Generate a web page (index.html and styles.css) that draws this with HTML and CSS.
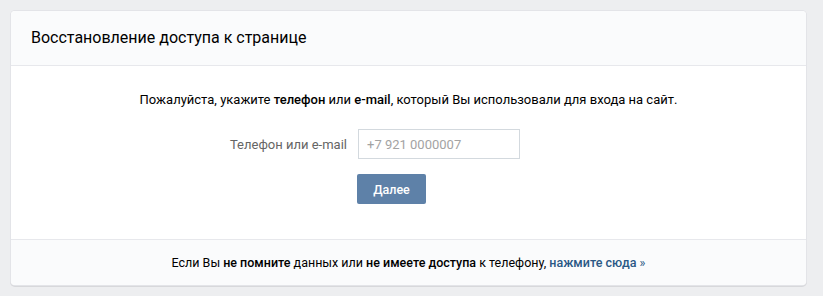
FILE: index.html
```html
<!DOCTYPE html>
<html lang="ru">

<head>
    <meta charset="utf-8">
    <title>Восстановление доступа к странице</title>
    <link rel="stylesheet" href="styles.css">
</head>

<body>
    <section class="card">
        <header class="card-head">Восстановление доступа к странице</header>

        <div class="card-body">
            <p class="intro">Пожалуйста, укажите <b>телефон</b> или <b>e-mail</b>, который Вы использовали для входа на сайт.</p>

            <form class="restore-form">
                <label class="restore-label" for="login">Телефон или e-mail</label>
                <input class="restore-input" id="login" type="text" placeholder="+7 921 0000007">
                <button class="restore-btn" type="button">Далее</button>
            </form>
        </div>

        <footer class="card-foot">
            Если Вы <b>не помните</b> данных или <b>не имеете доступа</b> к телефону, <a href="#"><b>нажмите сюда</b> »</a>
        </footer>
    </section>
</body>

</html>
```

FILE: styles.css
```css
body {
    margin: 0;
    padding: 11px 17px 11px 11px;
    background: #edeef0;
    font-family: Roboto, "Open Sans", sans-serif;
    font-size: 13px;
    color: #000;
}

.card {
    background: #fff;
    border-radius: 4px;
    box-shadow: 0 0 0 1px #e3e4e8, 0 1px 0 1px #d7d8db;
    overflow: hidden;
}

.card-head {
    height: 54px;
    line-height: 54px;
    padding: 0 20px;
    background: #fafbfc;
    border-bottom: 1px solid #e7e8ec;
    font-size: 16px;
}

.card-body {
    padding: 25px 0 35px;
}

.intro {
    margin: 0 0 21px;
    line-height: 17px;
    text-align: center;
}

.intro b,
.card-foot b {
    font-weight: 500;
}

.restore-form {
    display: grid;
    grid-template-columns: 336px 162px;
    column-gap: 11px;
    row-gap: 15px;
    align-items: center;
}

.restore-label {
    text-align: right;
    color: #656565;
}

.restore-input {
    box-sizing: border-box;
    width: 162px;
    height: 30px;
    margin: 0;
    padding: 0 8px;
    border: 1px solid #d3d9de;
    border-radius: 0;
    font-family: inherit;
    font-size: 13px;
    outline: none;
}

.restore-input::placeholder {
    color: #a3a3a3;
}

.restore-btn {
    grid-column: 2;
    justify-self: start;
    width: 69px;
    height: 30px;
    margin-left: -1px;
    padding: 0;
    border: 0;
    border-radius: 2px;
    background: #5e81a8;
    color: #fff;
    font-family: inherit;
    font-size: 12.5px;
    font-weight: 500;
    cursor: pointer;
}

.card-foot {
    height: 45px;
    line-height: 45px;
    background: #fafbfc;
    border-top: 1px solid #e7e8ec;
    text-align: center;
    font-size: 12.5px;
}

.card-foot a {
    color: #2a5885;
    text-decoration: none;
}
```
